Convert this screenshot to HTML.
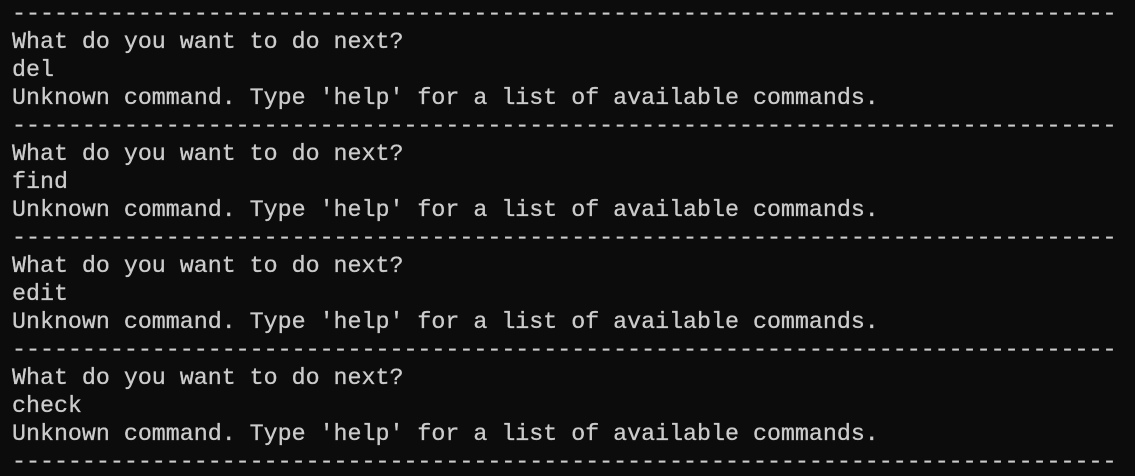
<!DOCTYPE html>
<html><head><style>
html,body{margin:0;padding:0;background:#0c0c0c;width:1135px;height:474px;overflow:hidden}
pre{margin:0;position:absolute;left:12px;top:0px;font-family:"Liberation Mono",monospace;font-size:23.3px;line-height:28px;color:#cccccc;-webkit-text-stroke:0.3px #cccccc}
</style></head><body><pre>-------------------------------------------------------------------------------
What do you want to do next?
del
Unknown command. Type 'help' for a list of available commands.
-------------------------------------------------------------------------------
What do you want to do next?
find
Unknown command. Type 'help' for a list of available commands.
-------------------------------------------------------------------------------
What do you want to do next?
edit
Unknown command. Type 'help' for a list of available commands.
-------------------------------------------------------------------------------
What do you want to do next?
check
Unknown command. Type 'help' for a list of available commands.
-------------------------------------------------------------------------------</pre></body></html>
